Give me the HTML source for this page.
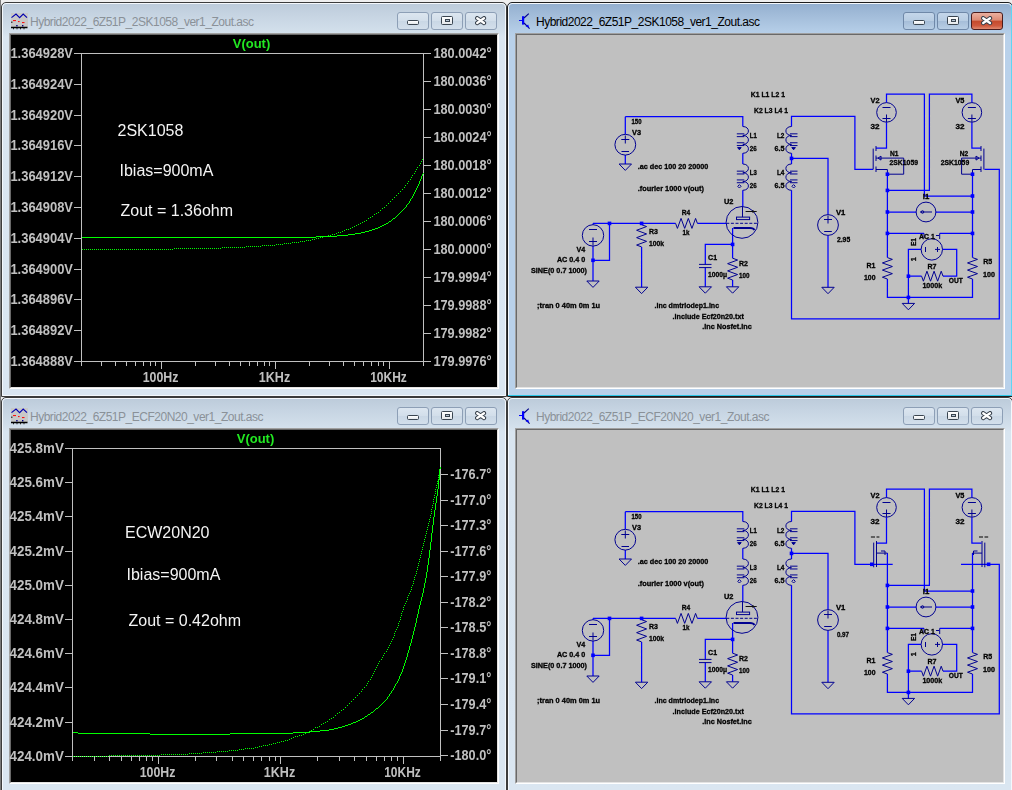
<!DOCTYPE html>
<html><head><meta charset="utf-8"><style>
*{margin:0;padding:0;box-sizing:border-box}
html,body{width:1012px;height:790px;overflow:hidden;background:#efefef;font-family:"Liberation Sans",sans-serif}
#edge{position:absolute;left:0;top:0;width:1px;height:790px;background:#7a7a7a}
.win{position:absolute;width:506px;height:395px;border:1px solid #3c3c3c;border-radius:5px 5px 0 0;background:#d9e4f0;overflow:hidden}
.win::before{content:"";position:absolute;left:0;top:0;right:0;bottom:0;border:1px solid #f4f8fc;border-radius:4px 4px 0 0;pointer-events:none}
.win .bar{position:absolute}
.win{background:linear-gradient(#bccbda 0px,#c6d4e2 12px,#d2dfeb 28px,#d9e5f0 34px,#dae6f1 100%)}
.win.act{border-color:#1e1e1e;background:linear-gradient(#93afcf 0px,#a2bcd9 12px,#b4cde7 28px,#b9d1ea 34px,#b9d1ea 100%)}
.win.act::after{content:"";position:absolute;right:0;bottom:0;left:0;top:0;border-right:1px solid #5ed6f4;border-bottom:1px solid #2cc8e8;pointer-events:none}
.ic{position:absolute;left:9px;top:10px;width:17px;height:17px}
.ic svg{display:block}
.tt{position:absolute;left:28px;top:12px;font-size:12px;letter-spacing:-0.49px;color:#8a9198;white-space:nowrap;line-height:15px}
.act .tt{color:#000}
.bt{position:absolute;top:9px;width:32px;height:18px;border:1px solid #8d9fb6;border-radius:3px;background:linear-gradient(#dce6f0,#d2deea 50%,#c9d7e5 51%,#d3dfeb)}
.act .bt{border-color:#6f88a8;background:linear-gradient(#c4d6ea,#b7cce2 50%,#a5bdd8 51%,#b8cee5)}
.b1{left:395px} .b2{left:429px} .b3{left:463px}
.act .b3{border-color:#4a1c1c;background:linear-gradient(#eab0a0,#dd8a74 45%,#c44a2c 50%,#cf5a3e 80%,#e08a70)}
.gmin{position:absolute;left:9px;top:7px;width:12px;height:5px;border:1px solid #3a4550;border-radius:1.5px;background:linear-gradient(#fff,#e4e8ec)}
.gres{position:absolute;left:9px;top:3px;width:12px;height:9px;border:1px solid #3a4550;border-radius:1.5px;background:linear-gradient(#fff,#e4e8ec)}
.gres b{position:absolute;left:2.5px;top:2px;width:5px;height:3px;border:1px solid #3a4550;background:#b8c6d4}
.b3 svg{position:absolute;left:8px;top:2.5px}
.cl{position:absolute;left:7px;top:30px;width:490px;height:356px;border-style:solid;border-width:1px;border-color:#a0a0a0 #ffffff #ffffff #a0a0a0}
.cl::before{content:"";position:absolute;left:0;top:0;right:0;bottom:0;border-style:solid;border-width:1px;border-color:#696969 #e3e3e3 #e3e3e3 #696969}
.cl.plt{background:#000}
.cl.sch{background:#c0c0c0}
#ov{position:absolute;left:0;top:0;will-change:transform}
#ov text{font-family:"Liberation Sans",sans-serif;font-size:14px;font-weight:bold;fill:#c0c0c0}
#ov .s text{font-size:7.2px;font-weight:bold;fill:#000;stroke:#000;stroke-width:0.3px}
</style></head><body>
<div id="edge"></div>
<div class="win" style="left:1px;top:2px">
<div class="ic"><svg class="plt" width="17" height="17" viewBox="0 0 17 17"><rect x="0" y="0" width="17" height="14" fill="#c8c8c8"/><path d="M0.5 4.6L5 1L8.6 4.6L12.2 1L16 4.6" fill="none" stroke="#0000b0" stroke-width="1.1"/><path d="M2 7.6h3M7 8.6h1.6M11 9.6h2.5" stroke="#ff0000" stroke-width="1"/><rect x="0.2" y="8.6" width="1.2" height="1.2" fill="#000"/><rect x="5.2" y="12" width="1.4" height="1.4" fill="#000080"/><rect x="11" y="12" width="1.4" height="1.4" fill="#000080"/><path d="M0 14.5H16.5" stroke="#000" stroke-width="1.6"/><path d="M2.5 15V16.3M6 15V16.3M9.5 15V16.3M13 15V16.3" stroke="#000" stroke-width="0.8"/></svg></div><div class="tt">Hybrid2022_6Z51P_2SK1058_ver1_Zout.asc</div>
<div class="bt b1"><i class="gmin"></i></div><div class="bt b2"><i class="gres"><b></b></i></div><div class="bt b3"><svg width="14" height="11" viewBox="0 0 14 11"><path d="M3.2 2.2L10 7M10 2.2L3.2 7" stroke="#363f4a" stroke-width="4.3" stroke-linecap="round"/><path d="M3.2 2.2L10 7M10 2.2L3.2 7" stroke="#fff" stroke-width="2.3" stroke-linecap="round"/></svg></div>
<div class="cl plt"></div>
</div>
<div class="win act" style="left:507px;top:2px">
<div class="ic"><svg class="sch" width="16" height="17" viewBox="0 0 16 17"><path d="M2 7.5H5.2" stroke="#0000ff" stroke-width="1"/><rect x="5" y="3.2" width="2.2" height="8.4" fill="#0000ff"/><path d="M7 5L11.8 0.6" stroke="#00008a" stroke-width="1.1"/><path d="M7 10L12.6 15.6" stroke="#00008a" stroke-width="1.1"/><path d="M8.6 13.2L11.2 11.4L12 14.6Z" fill="#0000ff"/></svg></div><div class="tt">Hybrid2022_6Z51P_2SK1058_ver1_Zout.asc</div>
<div class="bt b1"><i class="gmin"></i></div><div class="bt b2"><i class="gres"><b></b></i></div><div class="bt b3"><svg width="14" height="11" viewBox="0 0 14 11"><path d="M3.2 2.2L10 7M10 2.2L3.2 7" stroke="#363f4a" stroke-width="4.3" stroke-linecap="round"/><path d="M3.2 2.2L10 7M10 2.2L3.2 7" stroke="#fff" stroke-width="2.3" stroke-linecap="round"/></svg></div>
<div class="cl sch"></div>
</div>
<div class="win" style="left:1px;top:397px">
<div class="ic"><svg class="plt" width="17" height="17" viewBox="0 0 17 17"><rect x="0" y="0" width="17" height="14" fill="#c8c8c8"/><path d="M0.5 4.6L5 1L8.6 4.6L12.2 1L16 4.6" fill="none" stroke="#0000b0" stroke-width="1.1"/><path d="M2 7.6h3M7 8.6h1.6M11 9.6h2.5" stroke="#ff0000" stroke-width="1"/><rect x="0.2" y="8.6" width="1.2" height="1.2" fill="#000"/><rect x="5.2" y="12" width="1.4" height="1.4" fill="#000080"/><rect x="11" y="12" width="1.4" height="1.4" fill="#000080"/><path d="M0 14.5H16.5" stroke="#000" stroke-width="1.6"/><path d="M2.5 15V16.3M6 15V16.3M9.5 15V16.3M13 15V16.3" stroke="#000" stroke-width="0.8"/></svg></div><div class="tt">Hybrid2022_6Z51P_ECF20N20_ver1_Zout.asc</div>
<div class="bt b1"><i class="gmin"></i></div><div class="bt b2"><i class="gres"><b></b></i></div><div class="bt b3"><svg width="14" height="11" viewBox="0 0 14 11"><path d="M3.2 2.2L10 7M10 2.2L3.2 7" stroke="#363f4a" stroke-width="4.3" stroke-linecap="round"/><path d="M3.2 2.2L10 7M10 2.2L3.2 7" stroke="#fff" stroke-width="2.3" stroke-linecap="round"/></svg></div>
<div class="cl plt"></div>
</div>
<div class="win" style="left:507px;top:397px">
<div class="ic"><svg class="sch" width="16" height="17" viewBox="0 0 16 17"><path d="M2 7.5H5.2" stroke="#0000ff" stroke-width="1"/><rect x="5" y="3.2" width="2.2" height="8.4" fill="#0000ff"/><path d="M7 5L11.8 0.6" stroke="#00008a" stroke-width="1.1"/><path d="M7 10L12.6 15.6" stroke="#00008a" stroke-width="1.1"/><path d="M8.6 13.2L11.2 11.4L12 14.6Z" fill="#0000ff"/></svg></div><div class="tt">Hybrid2022_6Z51P_ECF20N20_ver1_Zout.asc</div>
<div class="bt b1"><i class="gmin"></i></div><div class="bt b2"><i class="gres"><b></b></i></div><div class="bt b3"><svg width="14" height="11" viewBox="0 0 14 11"><path d="M3.2 2.2L10 7M10 2.2L3.2 7" stroke="#363f4a" stroke-width="4.3" stroke-linecap="round"/><path d="M3.2 2.2L10 7M10 2.2L3.2 7" stroke="#fff" stroke-width="2.3" stroke-linecap="round"/></svg></div>
<div class="cl sch"></div>
</div>
<svg id="ov" width="1012" height="790" viewBox="0 0 1012 790">
<path d="M81.5 53.5H423.5V361.5H81.5Z" fill="none" stroke="#c0c0c0" stroke-width="1" shape-rendering="crispEdges"/>
<text x="73" y="58" text-anchor="end" textLength="62.6" lengthAdjust="spacingAndGlyphs">1.364928V</text>
<text x="73" y="89" text-anchor="end" textLength="62.6" lengthAdjust="spacingAndGlyphs">1.364924V</text>
<text x="73" y="120" text-anchor="end" textLength="62.6" lengthAdjust="spacingAndGlyphs">1.364920V</text>
<text x="73" y="150" text-anchor="end" textLength="62.6" lengthAdjust="spacingAndGlyphs">1.364916V</text>
<text x="73" y="181" text-anchor="end" textLength="62.6" lengthAdjust="spacingAndGlyphs">1.364912V</text>
<text x="73" y="212" text-anchor="end" textLength="62.6" lengthAdjust="spacingAndGlyphs">1.364908V</text>
<text x="73" y="243" text-anchor="end" textLength="62.6" lengthAdjust="spacingAndGlyphs">1.364904V</text>
<text x="73" y="274" text-anchor="end" textLength="62.6" lengthAdjust="spacingAndGlyphs">1.364900V</text>
<text x="73" y="304" text-anchor="end" textLength="62.6" lengthAdjust="spacingAndGlyphs">1.364896V</text>
<text x="73" y="335" text-anchor="end" textLength="62.6" lengthAdjust="spacingAndGlyphs">1.364892V</text>
<text x="73" y="366" text-anchor="end" textLength="62.6" lengthAdjust="spacingAndGlyphs">1.364888V</text>
<text x="433.4" y="58" textLength="58.2" lengthAdjust="spacingAndGlyphs">180.0042°</text>
<text x="433.4" y="86" textLength="58.2" lengthAdjust="spacingAndGlyphs">180.0036°</text>
<text x="433.4" y="114" textLength="58.2" lengthAdjust="spacingAndGlyphs">180.0030°</text>
<text x="433.4" y="142" textLength="58.2" lengthAdjust="spacingAndGlyphs">180.0024°</text>
<text x="433.4" y="170" textLength="58.2" lengthAdjust="spacingAndGlyphs">180.0018°</text>
<text x="433.4" y="198" textLength="58.2" lengthAdjust="spacingAndGlyphs">180.0012°</text>
<text x="433.4" y="226" textLength="58.2" lengthAdjust="spacingAndGlyphs">180.0006°</text>
<text x="433.4" y="254" textLength="58.2" lengthAdjust="spacingAndGlyphs">180.0000°</text>
<text x="433.4" y="282" textLength="58.2" lengthAdjust="spacingAndGlyphs">179.9994°</text>
<text x="433.4" y="310" textLength="58.2" lengthAdjust="spacingAndGlyphs">179.9988°</text>
<text x="433.4" y="338" textLength="58.2" lengthAdjust="spacingAndGlyphs">179.9982°</text>
<text x="433.4" y="366" textLength="58.2" lengthAdjust="spacingAndGlyphs">179.9976°</text>
<path d="M74 53.5H81 M74 84.5H81 M74 115.5H81 M74 145.5H81 M74 176.5H81 M74 207.5H81 M74 238.5H81 M74 269.5H81 M74 299.5H81 M74 330.5H81 M74 361.5H81 M424 53.5H431 M424 81.5H431 M424 109.5H431 M424 137.5H431 M424 165.5H431 M424 193.5H431 M424 221.5H431 M424 249.5H431 M424 277.5H431 M424 305.5H431 M424 333.5H431 M424 361.5H431 M81.5 362V366 M101.5 362V366 M115.5 362V366 M126.5 362V366 M135.5 362V366 M143.5 362V366 M150.5 362V366 M155.5 362V366 M161.5 362V369 M195.5 362V366 M215.5 362V366 M229.5 362V366 M240.5 362V366 M249.5 362V366 M257.5 362V366 M264.5 362V366 M269.5 362V366 M275.5 362V369 M309.5 362V366 M329.5 362V366 M343.5 362V366 M354.5 362V366 M363.5 362V366 M371.5 362V366 M378.5 362V366 M383.5 362V366 M389.5 362V369 M423.5 362V366" stroke="#c0c0c0" stroke-width="1" shape-rendering="crispEdges"/>
<text x="142.65" y="382" textLength="35.7" lengthAdjust="spacingAndGlyphs">100Hz</text>
<text x="258.8" y="382" textLength="31.4" lengthAdjust="spacingAndGlyphs">1KHz</text>
<text x="370.2" y="382" textLength="36.6" lengthAdjust="spacingAndGlyphs">10KHz</text>
<text x="251.5" y="47.5" text-anchor="middle" style="font-size:13px;fill:#22e822">V(out)</text>
<path d="M82 237h234v1h-234zM316 236h21v1h-21zM337 235h11v1h-11zM348 234h7v1h-7zM355 233h6v1h-6zM361 232h4v1h-4zM365 231h4v1h-4zM369 230h3v1h-3zM372 229h3v1h-3zM375 228h3v1h-3zM378 227h2v1h-2zM380 226h2v1h-2zM382 225h2v1h-2zM384 224h2v1h-2zM386 223h2v1h-2zM388 222h1v1h-1zM389 221h2v1h-2zM391 220h1v1h-1zM392 219h1v1h-1zM393 218h2v1h-2zM395 217h1v1h-1zM396 216h1v1h-1zM397 215h1v1h-1zM398 214h1v1h-1zM399 213h1v1h-1zM400 212h1v1h-1zM401 211h1v1h-1zM402 210h1v1h-1zM403 209h1v1h-1zM404 208h1v1h-1zM405 207h1v1h-1zM406 206h1v1h-1zM406 205h1v1h-1zM407 204h1v1h-1zM408 203h1v1h-1zM409 202h1v1h-1zM409 201h1v1h-1zM410 200h1v1h-1zM410 199h1v1h-1zM411 198h1v1h-1zM412 197h1v1h-1zM412 196h1v1h-1zM413 195h1v1h-1zM413 194h1v1h-1zM414 193h1v1h-1zM414 192h1v1h-1zM415 191h1v1h-1zM415 190h1v1h-1zM416 189h1v1h-1zM416 188h1v1h-1zM417 187h1v1h-1zM417 186h1v1h-1zM418 185h1v1h-1zM418 184h1v1h-1zM419 183h1v1h-1zM419 182h1v1h-1zM419 181h1v1h-1zM420 180h1v1h-1zM420 179h1v1h-1zM421 178h1v1h-1zM421 177h1v1h-1zM421 176h1v1h-1zM422 175h1v1h-1zM422 174h1v1h-1zM423 173h1v1h-1z" fill="#00ff00" shape-rendering="crispEdges"/>
<path d="M82 249h1v1h-1zM84 249h1v1h-1zM86 249h1v1h-1zM88 249h1v1h-1zM90 249h1v1h-1zM92 249h1v1h-1zM94 249h1v1h-1zM96 249h1v1h-1zM98 249h1v1h-1zM100 249h1v1h-1zM102 249h1v1h-1zM104 249h1v1h-1zM106 249h1v1h-1zM108 249h1v1h-1zM110 249h1v1h-1zM112 249h1v1h-1zM114 249h1v1h-1zM116 249h1v1h-1zM118 249h1v1h-1zM120 249h1v1h-1zM122 249h1v1h-1zM124 249h1v1h-1zM126 249h1v1h-1zM128 249h1v1h-1zM130 249h1v1h-1zM132 249h1v1h-1zM134 249h1v1h-1zM136 249h1v1h-1zM138 249h1v1h-1zM140 249h1v1h-1zM142 249h1v1h-1zM144 249h1v1h-1zM146 249h1v1h-1zM148 249h1v1h-1zM150 249h1v1h-1zM152 249h1v1h-1zM154 249h1v1h-1zM156 249h1v1h-1zM158 249h1v1h-1zM160 249h1v1h-1zM162 249h1v1h-1zM164 249h1v1h-1zM166 249h1v1h-1zM168 249h1v1h-1zM170 249h1v1h-1zM172 249h1v1h-1zM174 248h1v1h-1zM176 248h1v1h-1zM178 248h1v1h-1zM180 248h1v1h-1zM182 248h1v1h-1zM184 248h1v1h-1zM186 248h1v1h-1zM188 248h1v1h-1zM190 248h1v1h-1zM192 248h1v1h-1zM194 248h1v1h-1zM196 248h1v1h-1zM198 248h1v1h-1zM200 248h1v1h-1zM202 248h1v1h-1zM204 248h1v1h-1zM206 248h1v1h-1zM208 248h1v1h-1zM210 248h1v1h-1zM212 248h1v1h-1zM214 248h1v1h-1zM216 248h1v1h-1zM218 248h1v1h-1zM220 248h1v1h-1zM222 247h1v1h-1zM224 247h1v1h-1zM226 247h1v1h-1zM228 247h1v1h-1zM230 247h1v1h-1zM232 247h1v1h-1zM234 247h1v1h-1zM236 247h1v1h-1zM238 247h1v1h-1zM240 247h1v1h-1zM242 247h1v1h-1zM244 247h1v1h-1zM246 246h1v1h-1zM248 246h1v1h-1zM250 246h1v1h-1zM252 246h1v1h-1zM254 246h1v1h-1zM256 246h1v1h-1zM258 246h1v1h-1zM260 246h1v1h-1zM262 245h1v1h-1zM264 245h1v1h-1zM266 245h1v1h-1zM268 245h1v1h-1zM270 245h1v1h-1zM272 245h1v1h-1zM274 245h1v1h-1zM276 244h1v1h-1zM278 244h1v1h-1zM280 244h1v1h-1zM282 244h1v1h-1zM284 243h1v1h-1zM286 243h1v1h-1zM288 243h1v1h-1zM290 243h1v1h-1zM292 242h1v1h-1zM294 242h1v1h-1zM296 242h1v1h-1zM298 242h1v1h-1zM300 241h1v1h-1zM302 241h1v1h-1zM304 241h1v1h-1zM306 240h1v1h-1zM308 240h1v1h-1zM310 240h1v1h-1zM312 239h1v1h-1zM314 239h1v1h-1zM316 238h1v1h-1zM318 238h1v1h-1zM320 237h1v1h-1zM322 237h1v1h-1zM324 236h1v1h-1zM326 236h1v1h-1zM328 235h1v1h-1zM330 235h1v1h-1zM332 234h1v1h-1zM334 234h1v1h-1zM336 233h1v1h-1zM338 232h1v1h-1zM340 232h1v1h-1zM342 231h1v1h-1zM344 230h1v1h-1zM346 229h1v1h-1zM348 229h1v1h-1zM350 228h1v1h-1zM352 227h1v1h-1zM354 226h1v1h-1zM356 225h1v1h-1zM358 224h1v1h-1zM360 223h1v1h-1zM362 222h1v1h-1zM364 221h1v1h-1zM366 220h1v1h-1zM368 218h1v1h-1zM370 217h1v1h-1zM372 216h1v1h-1zM374 214h1v1h-1zM376 213h1v1h-1zM378 212h1v1h-1zM380 210h1v1h-1zM382 208h1v1h-1zM384 207h1v1h-1zM386 205h1v1h-1zM388 203h1v1h-1zM390 201h1v1h-1zM392 199h1v1h-1zM394 197h1v1h-1zM396 195h1v1h-1zM398 193h1v1h-1zM400 191h1v1h-1zM402 189h1v1h-1zM404 187h1v1h-1zM405 185h1v1h-1zM407 183h1v1h-1zM408 181h1v1h-1zM410 179h1v1h-1zM411 177h1v1h-1zM412 175h1v1h-1zM414 173h1v1h-1zM415 171h1v1h-1zM416 169h1v1h-1zM417 167h1v1h-1zM419 165h1v1h-1zM420 163h1v1h-1zM421 161h1v1h-1zM422 159h1v1h-1z" fill="#00ff00" shape-rendering="crispEdges"/>
<text x="117.5" y="135.5" style="font-size:16px;font-weight:normal;fill:#f4f4f4">2SK1058</text>
<text x="119.5" y="175.5" style="font-size:16px;font-weight:normal;fill:#f4f4f4">Ibias=900mA</text>
<text x="120.5" y="215.5" style="font-size:16px;font-weight:normal;fill:#f4f4f4">Zout = 1.36ohm</text>
<path d="M72.5 448.5H440.5V756.5H72.5Z" fill="none" stroke="#c0c0c0" stroke-width="1" shape-rendering="crispEdges"/>
<text x="63.8" y="453" text-anchor="end" textLength="54.2" lengthAdjust="spacingAndGlyphs">425.8mV</text>
<text x="63.8" y="487" text-anchor="end" textLength="54.2" lengthAdjust="spacingAndGlyphs">425.6mV</text>
<text x="63.8" y="521" text-anchor="end" textLength="54.2" lengthAdjust="spacingAndGlyphs">425.4mV</text>
<text x="63.8" y="556" text-anchor="end" textLength="54.2" lengthAdjust="spacingAndGlyphs">425.2mV</text>
<text x="63.8" y="590" text-anchor="end" textLength="54.2" lengthAdjust="spacingAndGlyphs">425.0mV</text>
<text x="63.8" y="624" text-anchor="end" textLength="54.2" lengthAdjust="spacingAndGlyphs">424.8mV</text>
<text x="63.8" y="658" text-anchor="end" textLength="54.2" lengthAdjust="spacingAndGlyphs">424.6mV</text>
<text x="63.8" y="692" text-anchor="end" textLength="54.2" lengthAdjust="spacingAndGlyphs">424.4mV</text>
<text x="63.8" y="727" text-anchor="end" textLength="54.2" lengthAdjust="spacingAndGlyphs">424.2mV</text>
<text x="63.8" y="761" text-anchor="end" textLength="54.2" lengthAdjust="spacingAndGlyphs">424.0mV</text>
<text x="450.3" y="479" textLength="41" lengthAdjust="spacingAndGlyphs">-176.7°</text>
<text x="450.3" y="505" textLength="41" lengthAdjust="spacingAndGlyphs">-177.0°</text>
<text x="450.3" y="530" textLength="41" lengthAdjust="spacingAndGlyphs">-177.3°</text>
<text x="450.3" y="556" textLength="41" lengthAdjust="spacingAndGlyphs">-177.6°</text>
<text x="450.3" y="581" textLength="41" lengthAdjust="spacingAndGlyphs">-177.9°</text>
<text x="450.3" y="607" textLength="41" lengthAdjust="spacingAndGlyphs">-178.2°</text>
<text x="450.3" y="632" textLength="41" lengthAdjust="spacingAndGlyphs">-178.5°</text>
<text x="450.3" y="658" textLength="41" lengthAdjust="spacingAndGlyphs">-178.8°</text>
<text x="450.3" y="683" textLength="41" lengthAdjust="spacingAndGlyphs">-179.1°</text>
<text x="450.3" y="709" textLength="41" lengthAdjust="spacingAndGlyphs">-179.4°</text>
<text x="450.3" y="735" textLength="41" lengthAdjust="spacingAndGlyphs">-179.7°</text>
<text x="450.3" y="760" textLength="41" lengthAdjust="spacingAndGlyphs">-180.0°</text>
<path d="M65 448.5H72 M65 482.5H72 M65 516.5H72 M65 551.5H72 M65 585.5H72 M65 619.5H72 M65 653.5H72 M65 687.5H72 M65 722.5H72 M65 756.5H72 M441 474.5H448 M441 500.5H448 M441 525.5H448 M441 551.5H448 M441 576.5H448 M441 602.5H448 M441 627.5H448 M441 653.5H448 M441 678.5H448 M441 704.5H448 M441 730.5H448 M441 755.5H448 M72.5 757V761 M94.5 757V761 M109.5 757V761 M121.5 757V761 M131.5 757V761 M139.5 757V761 M146.5 757V761 M152.5 757V761 M158.5 757V764 M195.5 757V761 M216.5 757V761 M232.5 757V761 M243.5 757V761 M253.5 757V761 M261.5 757V761 M269.5 757V761 M275.5 757V761 M280.5 757V764 M317.5 757V761 M339.5 757V761 M354.5 757V761 M366.5 757V761 M376.5 757V761 M384.5 757V761 M391.5 757V761 M397.5 757V761 M403.5 757V764 M440.5 757V761" stroke="#c0c0c0" stroke-width="1" shape-rendering="crispEdges"/>
<text x="139.65" y="777" textLength="35.7" lengthAdjust="spacingAndGlyphs">100Hz</text>
<text x="263.8" y="777" textLength="31.4" lengthAdjust="spacingAndGlyphs">1KHz</text>
<text x="384.2" y="777" textLength="36.6" lengthAdjust="spacingAndGlyphs">10KHz</text>
<text x="255.5" y="442.5" text-anchor="middle" style="font-size:13px;fill:#22e822">V(out)</text>
<path d="M73 732h5v1h-5zM78 733h72v1h-72zM150 734h80v1h-80zM230 733h63v1h-63zM293 732h17v1h-17zM310 731h10v1h-10zM320 730h9v1h-9zM329 729h5v1h-5zM334 728h4v1h-4zM338 727h4v1h-4zM342 726h3v1h-3zM345 725h3v1h-3zM348 724h3v1h-3zM351 723h2v1h-2zM353 722h3v1h-3zM356 721h2v1h-2zM358 720h2v1h-2zM360 719h2v1h-2zM362 718h2v1h-2zM364 717h1v1h-1zM365 716h2v1h-2zM367 715h1v1h-1zM368 714h2v1h-2zM370 713h1v1h-1zM371 712h2v1h-2zM373 711h1v1h-1zM374 710h1v1h-1zM375 709h1v1h-1zM376 708h2v1h-2zM378 707h1v1h-1zM379 706h1v1h-1zM380 705h1v1h-1zM381 704h1v1h-1zM382 703h1v1h-1zM383 702h1v1h-1zM384 701h1v1h-1zM385 700h1v1h-1zM386 699h1v1h-1zM387 698h1v1h-1zM387 697h1v1h-1zM388 696h1v1h-1zM389 695h1v1h-1zM389 694h1v1h-1zM390 693h1v1h-1zM391 692h1v1h-1zM391 691h1v1h-1zM392 690h1v1h-1zM393 689h1v1h-1zM393 688h1v1h-1zM394 687h1v1h-1zM394 686h1v1h-1zM395 685h1v1h-1zM395 684h1v1h-1zM396 683h1v1h-1zM397 682h1v1h-1zM397 681h1v1h-1zM398 680h1v1h-1zM398 679h1v1h-1zM399 678h1v1h-1zM399 677h1v1h-1zM399 676h1v1h-1zM400 675h1v1h-1zM400 674h1v1h-1zM401 673h1v1h-1zM401 672h1v1h-1zM402 671h1v1h-1zM402 670h1v1h-1zM402 669h1v1h-1zM403 668h1v1h-1zM403 667h1v1h-1zM403 666h1v1h-1zM404 665h1v1h-1zM404 664h1v1h-1zM404 663h1v1h-1zM405 662h1v1h-1zM405 661h1v1h-1zM405 660h1v1h-1zM406 659h1v1h-1zM406 658h1v1h-1zM406 657h1v1h-1zM407 656h1v1h-1zM407 655h1v1h-1zM407 654h1v1h-1zM407 653h1v1h-1zM408 652h1v1h-1zM408 651h1v1h-1zM408 650h1v1h-1zM409 649h1v1h-1zM409 648h1v1h-1zM409 647h1v1h-1zM409 646h1v1h-1zM410 645h1v1h-1zM410 644h1v1h-1zM410 643h1v1h-1zM411 642h1v1h-1zM411 641h1v1h-1zM411 640h1v1h-1zM411 639h1v1h-1zM412 638h1v1h-1zM412 637h1v1h-1zM412 636h1v1h-1zM412 635h1v1h-1zM413 634h1v1h-1zM413 633h1v1h-1zM413 632h1v1h-1zM413 631h1v1h-1zM414 630h1v1h-1zM414 629h1v1h-1zM414 628h1v1h-1zM414 627h1v1h-1zM415 626h1v1h-1zM415 625h1v1h-1zM415 624h1v1h-1zM415 623h1v1h-1zM416 622h1v1h-1zM416 621h1v1h-1zM416 620h1v1h-1zM416 619h1v1h-1zM416 618h1v1h-1zM417 617h1v1h-1zM417 616h1v1h-1zM417 615h1v1h-1zM417 614h1v1h-1zM418 613h1v1h-1zM418 612h1v1h-1zM418 611h1v1h-1zM418 610h1v1h-1zM418 609h1v1h-1zM419 608h1v1h-1zM419 607h1v1h-1zM419 606h1v1h-1zM419 605h1v1h-1zM420 604h1v1h-1zM420 603h1v1h-1zM420 602h1v1h-1zM420 601h1v1h-1zM421 600h1v1h-1zM421 599h1v1h-1zM421 598h1v1h-1zM421 597h1v1h-1zM422 596h1v1h-1zM422 595h1v1h-1zM422 594h1v1h-1zM422 593h1v1h-1zM423 592h1v1h-1zM423 591h1v1h-1zM423 590h1v1h-1zM423 589h1v1h-1zM423 588h1v1h-1zM424 587h1v1h-1zM424 586h1v1h-1zM424 585h1v1h-1zM424 584h1v1h-1zM424 583h1v1h-1zM425 582h1v1h-1zM425 581h1v1h-1zM425 580h1v1h-1zM425 579h1v1h-1zM425 578h1v1h-1zM426 577h1v1h-1zM426 576h1v1h-1zM426 575h1v1h-1zM426 574h1v1h-1zM426 573h1v1h-1zM426 572h1v1h-1zM427 571h1v1h-1zM427 570h1v1h-1zM427 569h1v1h-1zM427 568h1v1h-1zM427 567h1v1h-1zM427 566h1v1h-1zM427 565h1v1h-1zM428 564h1v1h-1zM428 563h1v1h-1zM428 562h1v1h-1zM428 561h1v1h-1zM428 560h1v1h-1zM428 559h1v1h-1zM428 558h1v1h-1zM429 557h1v1h-1zM429 556h1v1h-1zM429 555h1v1h-1zM429 554h1v1h-1zM429 553h1v1h-1zM429 552h1v1h-1zM429 551h1v1h-1zM429 550h1v1h-1zM430 549h1v1h-1zM430 548h1v1h-1zM430 547h1v1h-1zM430 546h1v1h-1zM430 545h1v1h-1zM430 544h1v1h-1zM430 543h1v1h-1zM430 542h1v1h-1zM431 541h1v1h-1zM431 540h1v1h-1zM431 539h1v1h-1zM431 538h1v1h-1zM431 537h1v1h-1zM431 536h1v1h-1zM431 535h1v1h-1zM431 534h1v1h-1zM431 533h1v1h-1zM432 532h1v1h-1zM432 531h1v1h-1zM432 530h1v1h-1zM432 529h1v1h-1zM432 528h1v1h-1zM432 527h1v1h-1zM432 526h1v1h-1zM432 525h1v1h-1zM433 524h1v1h-1zM433 523h1v1h-1zM433 522h1v1h-1zM433 521h1v1h-1zM433 520h1v1h-1zM433 519h1v1h-1zM433 518h1v1h-1zM433 517h1v1h-1zM434 516h1v1h-1zM434 515h1v1h-1zM434 514h1v1h-1zM434 513h1v1h-1zM434 512h1v1h-1zM434 511h1v1h-1zM434 510h1v1h-1zM435 509h1v1h-1zM435 508h1v1h-1zM435 507h1v1h-1zM435 506h1v1h-1zM435 505h1v1h-1zM435 504h1v1h-1zM435 503h1v1h-1zM436 502h1v1h-1zM436 501h1v1h-1zM436 500h1v1h-1zM436 499h1v1h-1zM436 498h1v1h-1zM436 497h1v1h-1zM436 496h1v1h-1zM437 495h1v1h-1zM437 494h1v1h-1zM437 493h1v1h-1zM437 492h1v1h-1zM437 491h1v1h-1zM437 490h1v1h-1zM437 489h1v1h-1zM438 488h1v1h-1zM438 487h1v1h-1zM438 486h1v1h-1zM438 485h1v1h-1zM438 484h1v1h-1zM438 483h1v1h-1zM438 482h1v1h-1zM438 481h1v1h-1zM438 480h1v1h-1zM439 479h1v1h-1zM439 478h1v1h-1zM439 477h1v1h-1zM439 476h1v1h-1zM439 475h1v1h-1zM439 474h1v1h-1zM439 473h1v1h-1zM439 472h1v1h-1zM439 471h1v1h-1zM439 470h1v1h-1zM439 469h1v1h-1zM440 468h1v1h-1z" fill="#00ff00" shape-rendering="crispEdges"/>
<path d="M73 756h1v1h-1zM75 756h1v1h-1zM77 756h1v1h-1zM79 756h1v1h-1zM81 756h1v1h-1zM83 756h1v1h-1zM85 756h1v1h-1zM87 756h1v1h-1zM89 756h1v1h-1zM91 756h1v1h-1zM93 756h1v1h-1zM95 756h1v1h-1zM97 756h1v1h-1zM99 756h1v1h-1zM101 756h1v1h-1zM103 756h1v1h-1zM105 756h1v1h-1zM107 756h1v1h-1zM109 755h1v1h-1zM111 755h1v1h-1zM113 755h1v1h-1zM115 755h1v1h-1zM117 755h1v1h-1zM119 755h1v1h-1zM121 755h1v1h-1zM123 755h1v1h-1zM125 755h1v1h-1zM127 755h1v1h-1zM129 755h1v1h-1zM131 755h1v1h-1zM133 755h1v1h-1zM135 755h1v1h-1zM137 755h1v1h-1zM139 755h1v1h-1zM141 755h1v1h-1zM143 755h1v1h-1zM145 755h1v1h-1zM147 755h1v1h-1zM149 755h1v1h-1zM151 755h1v1h-1zM153 755h1v1h-1zM155 755h1v1h-1zM157 755h1v1h-1zM159 755h1v1h-1zM161 754h1v1h-1zM163 754h1v1h-1zM165 754h1v1h-1zM167 754h1v1h-1zM169 754h1v1h-1zM171 754h1v1h-1zM173 754h1v1h-1zM175 754h1v1h-1zM177 754h1v1h-1zM179 754h1v1h-1zM181 754h1v1h-1zM183 754h1v1h-1zM185 754h1v1h-1zM187 754h1v1h-1zM189 753h1v1h-1zM191 753h1v1h-1zM193 753h1v1h-1zM195 753h1v1h-1zM197 753h1v1h-1zM199 753h1v1h-1zM201 753h1v1h-1zM203 752h1v1h-1zM205 752h1v1h-1zM207 752h1v1h-1zM209 752h1v1h-1zM211 752h1v1h-1zM213 752h1v1h-1zM215 752h1v1h-1zM217 751h1v1h-1zM219 751h1v1h-1zM221 751h1v1h-1zM223 751h1v1h-1zM225 751h1v1h-1zM227 751h1v1h-1zM229 750h1v1h-1zM231 750h1v1h-1zM233 750h1v1h-1zM235 750h1v1h-1zM237 750h1v1h-1zM239 749h1v1h-1zM241 749h1v1h-1zM243 749h1v1h-1zM245 748h1v1h-1zM247 748h1v1h-1zM249 748h1v1h-1zM251 748h1v1h-1zM253 748h1v1h-1zM255 747h1v1h-1zM257 747h1v1h-1zM259 746h1v1h-1zM261 746h1v1h-1zM263 745h1v1h-1zM265 745h1v1h-1zM267 745h1v1h-1zM269 744h1v1h-1zM271 744h1v1h-1zM273 743h1v1h-1zM275 743h1v1h-1zM277 742h1v1h-1zM279 742h1v1h-1zM281 741h1v1h-1zM283 741h1v1h-1zM285 740h1v1h-1zM287 740h1v1h-1zM289 739h1v1h-1zM291 738h1v1h-1zM293 737h1v1h-1zM295 736h1v1h-1zM297 736h1v1h-1zM299 735h1v1h-1zM301 735h1v1h-1zM303 734h1v1h-1zM305 733h1v1h-1zM307 732h1v1h-1zM309 731h1v1h-1zM311 730h1v1h-1zM313 729h1v1h-1zM315 727h1v1h-1zM317 727h1v1h-1zM319 726h1v1h-1zM321 724h1v1h-1zM323 723h1v1h-1zM325 722h1v1h-1zM327 721h1v1h-1zM329 719h1v1h-1zM331 718h1v1h-1zM333 717h1v1h-1zM335 715h1v1h-1zM337 713h1v1h-1zM339 712h1v1h-1zM341 710h1v1h-1zM343 709h1v1h-1zM345 707h1v1h-1zM347 705h1v1h-1zM349 703h1v1h-1zM351 701h1v1h-1zM353 699h1v1h-1zM355 697h1v1h-1zM357 695h1v1h-1zM359 693h1v1h-1zM361 691h1v1h-1zM362 689h1v1h-1zM364 687h1v1h-1zM366 685h1v1h-1zM367 683h1v1h-1zM368 681h1v1h-1zM370 679h1v1h-1zM371 677h1v1h-1zM372 675h1v1h-1zM373 673h1v1h-1zM374 671h1v1h-1zM375 669h1v1h-1zM376 667h1v1h-1zM377 665h1v1h-1zM378 663h1v1h-1zM379 661h1v1h-1zM381 659h1v1h-1zM382 657h1v1h-1zM383 655h1v1h-1zM384 653h1v1h-1zM386 651h1v1h-1zM387 649h1v1h-1zM388 647h1v1h-1zM389 645h1v1h-1zM390 643h1v1h-1zM391 641h1v1h-1zM392 639h1v1h-1zM393 637h1v1h-1zM394 635h1v1h-1zM394 633h1v1h-1zM395 631h1v1h-1zM396 629h1v1h-1zM397 627h1v1h-1zM398 625h1v1h-1zM398 623h1v1h-1zM399 621h1v1h-1zM400 619h1v1h-1zM400 617h1v1h-1zM401 615h1v1h-1zM401 613h1v1h-1zM402 611h1v1h-1zM403 609h1v1h-1zM403 607h1v1h-1zM404 605h1v1h-1zM405 603h1v1h-1zM406 601h1v1h-1zM407 599h1v1h-1zM407 597h1v1h-1zM408 595h1v1h-1zM409 593h1v1h-1zM410 591h1v1h-1zM411 589h1v1h-1zM411 587h1v1h-1zM412 585h1v1h-1zM413 583h1v1h-1zM413 581h1v1h-1zM414 579h1v1h-1zM414 577h1v1h-1zM415 575h1v1h-1zM416 573h1v1h-1zM416 571h1v1h-1zM417 569h1v1h-1zM417 567h1v1h-1zM418 565h1v1h-1zM418 563h1v1h-1zM419 561h1v1h-1zM419 559h1v1h-1zM420 557h1v1h-1zM420 555h1v1h-1zM421 553h1v1h-1zM421 551h1v1h-1zM422 549h1v1h-1zM422 547h1v1h-1zM423 545h1v1h-1zM423 543h1v1h-1zM424 541h1v1h-1zM424 539h1v1h-1zM425 537h1v1h-1zM425 535h1v1h-1zM426 533h1v1h-1zM426 531h1v1h-1zM427 529h1v1h-1zM427 527h1v1h-1zM428 525h1v1h-1zM428 523h1v1h-1zM429 521h1v1h-1zM429 519h1v1h-1zM430 517h1v1h-1zM430 515h1v1h-1zM431 513h1v1h-1zM431 511h1v1h-1zM431 509h1v1h-1zM432 507h1v1h-1zM432 505h1v1h-1zM433 503h1v1h-1zM433 501h1v1h-1zM433 499h1v1h-1zM434 497h1v1h-1zM434 495h1v1h-1zM435 493h1v1h-1zM435 491h1v1h-1zM435 489h1v1h-1zM436 487h1v1h-1zM436 485h1v1h-1zM437 483h1v1h-1zM437 481h1v1h-1zM438 479h1v1h-1zM438 477h1v1h-1zM438 475h1v1h-1zM439 473h1v1h-1zM439 471h1v1h-1zM439 469h1v1h-1zM440 467h1v1h-1z" fill="#00ff00" shape-rendering="crispEdges"/>
<text x="125" y="538" style="font-size:16px;font-weight:normal;fill:#f4f4f4">ECW20N20</text>
<text x="126.5" y="579.5" style="font-size:16px;font-weight:normal;fill:#f4f4f4">Ibias=900mA</text>
<text x="128.5" y="625.5" style="font-size:16px;font-weight:normal;fill:#f4f4f4">Zout = 0.42ohm</text>
<g class="s"><path d="M625.3 116.7 L742.8 116.7 L742.8 126.5 M625.3 116.7 L625.3 134.3 M625.3 155.1 L625.3 164 M625.3 164 L625.3 164 M742.8 153.3 L742.8 164 M742.8 190.3 L742.8 206.5 M791.5 126.5 L791.5 116.4 L854.9 116.4 L854.9 169.3 L873 169.3 M791.5 153.3 L791.5 164 M791.5 190.3 L791.5 318.9 L999.3 318.9 L999.3 169.3 L984.5 169.3 M791.5 158.4 L828 158.4 L828 214.6 M828 235.4 L828 287.3 M828 287.3 L828 287.3 M593 223.4 L675.6 223.4 M697.4 223.4 L726.3 223.4 M593 224.7 L593 223.4 M609.5 223.4 L609.5 260.3 L593 260.3 M593 246.1 L593 281 M593 281 L593 281 M641.6 246.9 L641.6 287.2 M641.6 287.2 L641.6 287.2 M732.6 228 L732.6 258.2 M732.6 244.4 L705.3 244.4 L705.3 264.4 M705.3 267.6 L705.3 286.8 M705.3 286.8 L705.3 286.8 M732.6 280 L732.6 286.8 M732.6 286.8 L732.6 286.8 M886.5 102.6 L886.5 94.1 L924.4 94.1 L924.4 196 L972.5 196 M971.9 102.6 L971.9 94.1 L929.4 94.1 L929.4 190.4 L887.4 190.4 M886.5 122.2 L886.5 148.2 L876 148.2 M971.9 122.2 L971.9 148.2 L981 148.2 M887.4 174.2 L887.4 257.6 M972.5 174.2 L972.5 257.6 M887.4 212 L916.1 212 M935.9 212 L972.5 212 M887.4 233.4 L924 233.4 M939.7 233.4 L972.5 233.4 M921.1 249.4 L908.4 249.4 L908.4 303.4 M942.5 249.4 L956.7 249.4 L956.7 276.2 L943 276.2 M908.4 276.2 L921.6 276.2 M887.4 279 L887.4 297.4 L972.5 297.4 L972.5 279 M908.4 303.4 L908.4 303.4" fill="none" stroke="#0000ff" stroke-width="1.25"/>
<g fill="none" stroke="#000090" stroke-width="1"><circle cx="625.3" cy="144.7" r="10.4"/><path d="M621.3 139.5H629.3M625.3 135.5V143.5M621.5 151.5H629"/><path d="M619.1 164H631.5L625.3 170.4Z"/><path d="M742.8 126.5 C750.3 126.5 750.3 135.43 742.8 135.43 C750.3 135.43 750.3 144.37 742.8 144.37 C750.3 144.37 750.3 153.3 742.8 153.3"/><path d="M736.8 133.83H744.3 M736.8 136.63H744.3"/><path d="M736.8 142.77H744.3 M736.8 145.57H744.3"/><path d="M742.8 164 C750.3 164 750.3 172.77 742.8 172.77 C750.3 172.77 750.3 181.53 742.8 181.53 C750.3 181.53 750.3 190.3 742.8 190.3"/><path d="M736.8 171.17H744.3 M736.8 173.97H744.3"/><path d="M736.8 179.93H744.3 M736.8 182.73H744.3"/><path d="M737.6 147.6H741.2L739.4 149.8Z" fill="#000090"/><path d="M791.8 147.6H795.4L793.6 149.8Z" fill="#000090"/><path d="M739.4 184.6L741.1 186.3L739.4 188L737.7 186.3Z"/><path d="M793.6 184.6L795.3 186.3L793.6 188L791.9 186.3Z"/><path d="M791.5 126.5 C784 126.5 784 135.43 791.5 135.43 C784 135.43 784 144.37 791.5 144.37 C784 144.37 784 153.3 791.5 153.3"/><path d="M797.5 133.83H790 M797.5 136.63H790"/><path d="M797.5 142.77H790 M797.5 145.57H790"/><path d="M791.5 164 C784 164 784 172.77 791.5 172.77 C784 172.77 784 181.53 791.5 181.53 C784 181.53 784 190.3 791.5 190.3"/><path d="M797.5 171.17H790 M797.5 173.97H790"/><path d="M797.5 179.93H790 M797.5 182.73H790"/><circle cx="828" cy="225" r="10.4"/><path d="M824 219.5H832M828 215.5V223.5M824.2 231.5H831.8"/><path d="M821.8 287.3H834.2L828 293.7Z"/><path d="M675.6 223.4 L677.42 228.4 L681.05 218.4 L684.68 228.4 L688.32 218.4 L691.95 228.4 L695.58 218.4 L697.4 223.4"/><circle cx="593" cy="235.4" r="10.7"/><path d="M589 229.5H597M589 241.5H597M593 237.5V245.5"/><path d="M586.8 281H599.2L593 287.4Z"/><path d="M641.6 224.7 L646.6 226.55 L636.6 230.25 L646.6 233.95 L636.6 237.65 L646.6 241.35 L636.6 245.05 L641.6 246.9"/><path d="M635.4 287.2H647.8L641.6 293.6Z"/><circle cx="742" cy="222.4" r="15.9"/><path d="M742.5 206.5V217.1"/><rect x="736.5" y="217.1" width="13.1" height="2.5"/><path d="M726.3 223.3H758" stroke-dasharray="3 1.6"/><path d="M733.5 228H750 Q753.5 228 754.5 230" stroke-width="2"/><path d="M699 264.4H711.5M699 267.6H711.5"/><path d="M699.1 286.8H711.5L705.3 293.2Z"/><path d="M732.6 258.2 L737.6 260.02 L727.6 263.65 L737.6 267.28 L727.6 270.92 L737.6 274.55 L727.6 278.18 L732.6 280"/><path d="M726.4 286.8H738.8L732.6 293.2Z"/><circle cx="886.5" cy="112.4" r="9.8"/><path d="M882.5 107.5H890.5M882.5 118.5H890.5M886.5 114.5V122"/><circle cx="971.9" cy="112.4" r="9.8"/><path d="M967.9 107.5H975.9M967.9 118.5H975.9M971.9 114.5V122"/><path d="M873.2 148.6V169.5M876 146V151M876 155.5V161M876 166.5V172"/><path d="M876 158.1H903.7V174.2H887.4M876 169.5H887.4V174.2M878 158.1l3 -2v4z"/><path d="M983.9 148.6V169.5M981 146V151M981 155.5V161M981 166.5V172"/><path d="M981 158.1H961.6V174.2H972.5M981 169.5H972.5V174.2M979 158.1l-3 -2v4z"/><circle cx="926" cy="212" r="9.9"/><path d="M920 212H932"/><circle cx="922.5" cy="212" r="1.3"/><path d="M939.7 233.4V239M936 235.5H939M924 233.4V238"/><circle cx="931.8" cy="249.4" r="10.7"/><path d="M925.5 247V252M935 249.4H940M937.5 247V252"/><path d="M921.6 276.2 L923.38 281.2 L926.95 271.2 L930.52 281.2 L934.08 271.2 L937.65 281.2 L941.22 271.2 L943 276.2"/><path d="M887.4 257.6 L892.4 259.38 L882.4 262.95 L892.4 266.52 L882.4 270.08 L892.4 273.65 L882.4 277.22 L887.4 279"/><path d="M972.5 257.6 L977.5 259.38 L967.5 262.95 L977.5 266.52 L967.5 270.08 L977.5 273.65 L967.5 277.22 L972.5 279"/><path d="M902.2 303.4H914.6L908.4 309.8Z"/></g>
<g fill="#0000ff"><rect x="789.7" y="156.6" width="3.6" height="3.6"/><rect x="607.7" y="221.6" width="3.6" height="3.6"/><rect x="591.2" y="258.5" width="3.6" height="3.6"/><rect x="639.8" y="221.6" width="3.6" height="3.6"/><rect x="730.8" y="242.6" width="3.6" height="3.6"/><rect x="970.7" y="194.2" width="3.6" height="3.6"/><rect x="885.6" y="188.6" width="3.6" height="3.6"/><rect x="885.6" y="172.4" width="3.6" height="3.6"/><rect x="970.7" y="172.4" width="3.6" height="3.6"/><rect x="885.6" y="210.2" width="3.6" height="3.6"/><rect x="970.7" y="210.2" width="3.6" height="3.6"/><rect x="885.6" y="231.6" width="3.6" height="3.6"/><rect x="970.7" y="231.6" width="3.6" height="3.6"/><rect x="906.6" y="274.4" width="3.6" height="3.6"/><rect x="906.6" y="295.6" width="3.6" height="3.6"/></g>
<text x="631.5" y="124.1" textLength="10" lengthAdjust="spacingAndGlyphs">150</text><text x="632" y="134.9" textLength="9" lengthAdjust="spacingAndGlyphs">V3</text><text x="637.7" y="168.6" textLength="70.6" lengthAdjust="spacingAndGlyphs">.ac dec 100 20 20000</text><text x="637.7" y="190.9" textLength="66.3" lengthAdjust="spacingAndGlyphs">.fourier 1000 v(out)</text><text x="750.8" y="97.1" textLength="34.2" lengthAdjust="spacingAndGlyphs">K1 L1 L2 1</text><text x="754" y="113.1" textLength="34" lengthAdjust="spacingAndGlyphs">K2 L3 L4 1</text><text x="749.8" y="137.6" textLength="7" lengthAdjust="spacingAndGlyphs">L1</text><text x="749.8" y="151.1" textLength="7" lengthAdjust="spacingAndGlyphs">26</text><text x="749.8" y="174.9" textLength="7" lengthAdjust="spacingAndGlyphs">L3</text><text x="749.8" y="188.4" textLength="7" lengthAdjust="spacingAndGlyphs">26</text><text x="784.4" y="137.6" text-anchor="end" textLength="7.5" lengthAdjust="spacingAndGlyphs">L2</text><text x="784.4" y="151.1" text-anchor="end" textLength="10" lengthAdjust="spacingAndGlyphs">6.5</text><text x="784.4" y="174.9" text-anchor="end" textLength="7.5" lengthAdjust="spacingAndGlyphs">L4</text><text x="784.4" y="188.4" text-anchor="end" textLength="10" lengthAdjust="spacingAndGlyphs">6.5</text><text x="836" y="214.9" textLength="9.4" lengthAdjust="spacingAndGlyphs">V1</text><text x="836.9" y="242.4" textLength="13.3" lengthAdjust="spacingAndGlyphs">2.95</text><text x="585.3" y="251.9" text-anchor="end" textLength="8.7" lengthAdjust="spacingAndGlyphs">V4</text><text x="585.3" y="262.1" text-anchor="end" textLength="28.4" lengthAdjust="spacingAndGlyphs">AC 0.4 0</text><text x="587" y="273" text-anchor="end" textLength="56" lengthAdjust="spacingAndGlyphs">SINE(0 0.7 1000)</text><text x="537.1" y="308.2" textLength="63" lengthAdjust="spacingAndGlyphs">;tran 0 40m 0m 1u</text><text x="654.5" y="307.6" textLength="64.6" lengthAdjust="spacingAndGlyphs">.inc dmtriodep1.inc</text><text x="672.6" y="318.6" textLength="71.2" lengthAdjust="spacingAndGlyphs">.include Ecf20n20.txt</text><text x="702.3" y="329" textLength="49.4" lengthAdjust="spacingAndGlyphs">.inc Nosfet.inc</text><text x="686" y="215.4" text-anchor="middle" textLength="8.5" lengthAdjust="spacingAndGlyphs">R4</text><text x="686" y="235.1" text-anchor="middle" textLength="7" lengthAdjust="spacingAndGlyphs">1k</text><text x="649" y="234.1" textLength="9" lengthAdjust="spacingAndGlyphs">R3</text><text x="649" y="246" textLength="15" lengthAdjust="spacingAndGlyphs">100k</text><path d="M745.6 211.5H756.7M753 210V213" stroke="#101010" stroke-width="1" fill="none"/><text x="724" y="204.3" textLength="9.5" lengthAdjust="spacingAndGlyphs">U2</text><text x="708.1" y="260.1" textLength="9" lengthAdjust="spacingAndGlyphs">C1</text><text x="708" y="276.6" textLength="19" lengthAdjust="spacingAndGlyphs">1000μ</text><text x="738.9" y="266.1" textLength="9" lengthAdjust="spacingAndGlyphs">R2</text><text x="739" y="278" textLength="10.5" lengthAdjust="spacingAndGlyphs">100</text><text x="870.5" y="102.8" textLength="9" lengthAdjust="spacingAndGlyphs">V2</text><text x="870.5" y="129" textLength="9" lengthAdjust="spacingAndGlyphs">32</text><text x="955.4" y="102.8" textLength="9" lengthAdjust="spacingAndGlyphs">V5</text><text x="955.4" y="129" textLength="9" lengthAdjust="spacingAndGlyphs">32</text><text x="889.9" y="156" textLength="8.5" lengthAdjust="spacingAndGlyphs">N1</text><text x="889.5" y="165.1" textLength="28.5" lengthAdjust="spacingAndGlyphs">2SK1059</text><text x="959.7" y="156" textLength="8.5" lengthAdjust="spacingAndGlyphs">N2</text><text x="940.8" y="165.1" textLength="28.4" lengthAdjust="spacingAndGlyphs">2SK1059</text><text x="926" y="199.2" text-anchor="middle" textLength="6.5" lengthAdjust="spacingAndGlyphs">I1</text><text x="866.5" y="268.4" textLength="9" lengthAdjust="spacingAndGlyphs">R1</text><text x="864" y="280" textLength="11.5" lengthAdjust="spacingAndGlyphs">100</text><text x="983.3" y="264.3" textLength="9" lengthAdjust="spacingAndGlyphs">R5</text><text x="983" y="277" textLength="11.9" lengthAdjust="spacingAndGlyphs">100</text><text x="927.4" y="269.3" textLength="9" lengthAdjust="spacingAndGlyphs">R7</text><text x="922.4" y="288.2" textLength="19.8" lengthAdjust="spacingAndGlyphs">1000k</text><text x="948.8" y="283.3" textLength="14" lengthAdjust="spacingAndGlyphs">OUT</text><text x="919.1" y="238.8" textLength="15.7" lengthAdjust="spacingAndGlyphs">AC 1</text><text transform="translate(915.5 242) rotate(-90)" text-anchor="middle" textLength="8" lengthAdjust="spacingAndGlyphs">E1</text><text transform="translate(915.5 259.3) rotate(-90)" text-anchor="middle">1</text></g>
<g class="s"><path d="M625.3 511.7 L742.8 511.7 L742.8 521.5 M625.3 511.7 L625.3 529.3 M625.3 550.1 L625.3 559 M625.3 559 L625.3 559 M742.8 548.3 L742.8 559 M742.8 585.3 L742.8 601.5 M791.5 521.5 L791.5 511.4 L854.9 511.4 L854.9 564.3 L873 564.3 M791.5 548.3 L791.5 559 M791.5 585.3 L791.5 713.9 L999.3 713.9 L999.3 564.3 L984.5 564.3 M791.5 553.4 L828 553.4 L828 609.6 M828 630.4 L828 682.3 M828 682.3 L828 682.3 M593 618.4 L675.6 618.4 M697.4 618.4 L726.3 618.4 M593 619.7 L593 618.4 M609.5 618.4 L609.5 655.3 L593 655.3 M593 641.1 L593 676 M593 676 L593 676 M641.6 641.9 L641.6 682.2 M641.6 682.2 L641.6 682.2 M732.6 623 L732.6 653.2 M732.6 639.4 L705.3 639.4 L705.3 659.4 M705.3 662.6 L705.3 681.8 M705.3 681.8 L705.3 681.8 M732.6 675 L732.6 681.8 M732.6 681.8 L732.6 681.8 M886.5 497.6 L886.5 489.1 L924.4 489.1 L924.4 591 L972.5 591 M971.9 497.6 L971.9 489.1 L929.4 489.1 L929.4 585.4 L887.4 585.4 M886.5 517.2 L886.5 543.2 L876.5 543.2 M854.9 564.3 L892.7 564.3 M887.4 553.1 L887.4 652.6 M971.9 517.2 L971.9 543.2 L981.5 543.2 M961 564.3 L999.3 564.3 M972.5 553.1 L972.5 652.6 M887.4 607 L916.1 607 M935.9 607 L972.5 607 M887.4 628.4 L924 628.4 M939.7 628.4 L972.5 628.4 M921.1 644.4 L908.4 644.4 L908.4 698.4 M942.5 644.4 L956.7 644.4 L956.7 671.2 L943 671.2 M908.4 671.2 L921.6 671.2 M887.4 674 L887.4 692.4 L972.5 692.4 L972.5 674 M908.4 698.4 L908.4 698.4" fill="none" stroke="#0000ff" stroke-width="1.25"/>
<g fill="none" stroke="#000090" stroke-width="1"><circle cx="625.3" cy="539.7" r="10.4"/><path d="M621.3 534.5H629.3M625.3 530.5V538.5M621.5 546.5H629"/><path d="M619.1 559H631.5L625.3 565.4Z"/><path d="M742.8 521.5 C750.3 521.5 750.3 530.43 742.8 530.43 C750.3 530.43 750.3 539.37 742.8 539.37 C750.3 539.37 750.3 548.3 742.8 548.3"/><path d="M736.8 528.83H744.3 M736.8 531.63H744.3"/><path d="M736.8 537.77H744.3 M736.8 540.57H744.3"/><path d="M742.8 559 C750.3 559 750.3 567.77 742.8 567.77 C750.3 567.77 750.3 576.53 742.8 576.53 C750.3 576.53 750.3 585.3 742.8 585.3"/><path d="M736.8 566.17H744.3 M736.8 568.97H744.3"/><path d="M736.8 574.93H744.3 M736.8 577.73H744.3"/><path d="M737.6 542.6H741.2L739.4 544.8Z" fill="#000090"/><path d="M791.8 542.6H795.4L793.6 544.8Z" fill="#000090"/><path d="M739.4 579.6L741.1 581.3L739.4 583L737.7 581.3Z"/><path d="M793.6 579.6L795.3 581.3L793.6 583L791.9 581.3Z"/><path d="M791.5 521.5 C784 521.5 784 530.43 791.5 530.43 C784 530.43 784 539.37 791.5 539.37 C784 539.37 784 548.3 791.5 548.3"/><path d="M797.5 528.83H790 M797.5 531.63H790"/><path d="M797.5 537.77H790 M797.5 540.57H790"/><path d="M791.5 559 C784 559 784 567.77 791.5 567.77 C784 567.77 784 576.53 791.5 576.53 C784 576.53 784 585.3 791.5 585.3"/><path d="M797.5 566.17H790 M797.5 568.97H790"/><path d="M797.5 574.93H790 M797.5 577.73H790"/><circle cx="828" cy="620" r="10.4"/><path d="M824 614.5H832M828 610.5V618.5M824.2 626.5H831.8"/><path d="M821.8 682.3H834.2L828 688.7Z"/><path d="M675.6 618.4 L677.42 623.4 L681.05 613.4 L684.68 623.4 L688.32 613.4 L691.95 623.4 L695.58 613.4 L697.4 618.4"/><circle cx="593" cy="630.4" r="10.7"/><path d="M589 624.5H597M589 636.5H597M593 632.5V640.5"/><path d="M586.8 676H599.2L593 682.4Z"/><path d="M641.6 619.7 L646.6 621.55 L636.6 625.25 L646.6 628.95 L636.6 632.65 L646.6 636.35 L636.6 640.05 L641.6 641.9"/><path d="M635.4 682.2H647.8L641.6 688.6Z"/><circle cx="742" cy="617.4" r="15.9"/><path d="M742.5 601.5V612.1"/><rect x="736.5" y="612.1" width="13.1" height="2.5"/><path d="M726.3 618.3H758" stroke-dasharray="3 1.6"/><path d="M733.5 623H750 Q753.5 623 754.5 625" stroke-width="2"/><path d="M699 659.4H711.5M699 662.6H711.5"/><path d="M699.1 681.8H711.5L705.3 688.2Z"/><path d="M732.6 653.2 L737.6 655.02 L727.6 658.65 L737.6 662.28 L727.6 665.92 L737.6 669.55 L727.6 673.18 L732.6 675"/><path d="M726.4 681.8H738.8L732.6 688.2Z"/><circle cx="886.5" cy="507.4" r="9.8"/><path d="M882.5 502.5H890.5M882.5 513.5H890.5M886.5 509.5V517"/><circle cx="971.9" cy="507.4" r="9.8"/><path d="M967.9 502.5H975.9M967.9 513.5H975.9M971.9 509.5V517"/><path d="M873.7 542.6V567.3M876.5 541V567M876.5 553.1H887.4M881 551h4v4"/><path d="M870.9 537H875M876.5 537H879.4" stroke="#000" /><path d="M984.8 542.6V567.3M982 541V567M982 553.1H972.5M977.5 551h-4v4"/><path d="M979 537H983M984.5 537H988.2" stroke="#000"/><circle cx="926" cy="607" r="9.9"/><path d="M920 607H932"/><circle cx="922.5" cy="607" r="1.3"/><path d="M939.7 628.4V634M936 630.5H939M924 628.4V633"/><circle cx="931.8" cy="644.4" r="10.7"/><path d="M925.5 642V647M935 644.4H940M937.5 642V647"/><path d="M921.6 671.2 L923.38 676.2 L926.95 666.2 L930.52 676.2 L934.08 666.2 L937.65 676.2 L941.22 666.2 L943 671.2"/><path d="M887.4 652.6 L892.4 654.38 L882.4 657.95 L892.4 661.52 L882.4 665.08 L892.4 668.65 L882.4 672.22 L887.4 674"/><path d="M972.5 652.6 L977.5 654.38 L967.5 657.95 L977.5 661.52 L967.5 665.08 L977.5 668.65 L967.5 672.22 L972.5 674"/><path d="M902.2 698.4H914.6L908.4 704.8Z"/></g>
<g fill="#0000ff"><rect x="789.7" y="551.6" width="3.6" height="3.6"/><rect x="607.7" y="616.6" width="3.6" height="3.6"/><rect x="591.2" y="653.5" width="3.6" height="3.6"/><rect x="639.8" y="616.6" width="3.6" height="3.6"/><rect x="730.8" y="637.6" width="3.6" height="3.6"/><rect x="970.7" y="589.2" width="3.6" height="3.6"/><rect x="885.6" y="583.6" width="3.6" height="3.6"/><rect x="870" y="562.5" width="3.6" height="3.6"/><rect x="986.8" y="562.5" width="3.6" height="3.6"/><rect x="885.6" y="605.2" width="3.6" height="3.6"/><rect x="970.7" y="605.2" width="3.6" height="3.6"/><rect x="885.6" y="626.6" width="3.6" height="3.6"/><rect x="970.7" y="626.6" width="3.6" height="3.6"/><rect x="906.6" y="669.4" width="3.6" height="3.6"/><rect x="906.6" y="690.6" width="3.6" height="3.6"/></g>
<text x="631.5" y="519.1" textLength="10" lengthAdjust="spacingAndGlyphs">150</text><text x="632" y="529.9" textLength="9" lengthAdjust="spacingAndGlyphs">V3</text><text x="637.7" y="563.6" textLength="70.6" lengthAdjust="spacingAndGlyphs">.ac dec 100 20 20000</text><text x="637.7" y="585.9" textLength="66.3" lengthAdjust="spacingAndGlyphs">.fourier 1000 v(out)</text><text x="750.8" y="492.1" textLength="34.2" lengthAdjust="spacingAndGlyphs">K1 L1 L2 1</text><text x="754" y="508.1" textLength="34" lengthAdjust="spacingAndGlyphs">K2 L3 L4 1</text><text x="749.8" y="532.6" textLength="7" lengthAdjust="spacingAndGlyphs">L1</text><text x="749.8" y="546.1" textLength="7" lengthAdjust="spacingAndGlyphs">26</text><text x="749.8" y="569.9" textLength="7" lengthAdjust="spacingAndGlyphs">L3</text><text x="749.8" y="583.4" textLength="7" lengthAdjust="spacingAndGlyphs">26</text><text x="784.4" y="532.6" text-anchor="end" textLength="7.5" lengthAdjust="spacingAndGlyphs">L2</text><text x="784.4" y="546.1" text-anchor="end" textLength="10" lengthAdjust="spacingAndGlyphs">6.5</text><text x="784.4" y="569.9" text-anchor="end" textLength="7.5" lengthAdjust="spacingAndGlyphs">L4</text><text x="784.4" y="583.4" text-anchor="end" textLength="10" lengthAdjust="spacingAndGlyphs">6.5</text><text x="836" y="609.9" textLength="9.4" lengthAdjust="spacingAndGlyphs">V1</text><text x="836.9" y="637.4" textLength="12" lengthAdjust="spacingAndGlyphs">0.97</text><text x="585.3" y="646.9" text-anchor="end" textLength="8.7" lengthAdjust="spacingAndGlyphs">V4</text><text x="585.3" y="657.1" text-anchor="end" textLength="28.4" lengthAdjust="spacingAndGlyphs">AC 0.4 0</text><text x="587" y="668" text-anchor="end" textLength="56" lengthAdjust="spacingAndGlyphs">SINE(0 0.7 1000)</text><text x="537.1" y="703.2" textLength="63" lengthAdjust="spacingAndGlyphs">;tran 0 40m 0m 1u</text><text x="654.5" y="702.6" textLength="64.6" lengthAdjust="spacingAndGlyphs">.inc dmtriodep1.inc</text><text x="672.6" y="713.6" textLength="71.2" lengthAdjust="spacingAndGlyphs">.include Ecf20n20.txt</text><text x="702.3" y="724" textLength="49.4" lengthAdjust="spacingAndGlyphs">.inc Nosfet.inc</text><text x="686" y="610.4" text-anchor="middle" textLength="8.5" lengthAdjust="spacingAndGlyphs">R4</text><text x="686" y="630.1" text-anchor="middle" textLength="7" lengthAdjust="spacingAndGlyphs">1k</text><text x="649" y="629.1" textLength="9" lengthAdjust="spacingAndGlyphs">R3</text><text x="649" y="641" textLength="15" lengthAdjust="spacingAndGlyphs">100k</text><path d="M745.6 606.5H756.7M753 605V608" stroke="#101010" stroke-width="1" fill="none"/><text x="724" y="599.3" textLength="9.5" lengthAdjust="spacingAndGlyphs">U2</text><text x="708.1" y="655.1" textLength="9" lengthAdjust="spacingAndGlyphs">C1</text><text x="708" y="671.6" textLength="19" lengthAdjust="spacingAndGlyphs">1000μ</text><text x="738.9" y="661.1" textLength="9" lengthAdjust="spacingAndGlyphs">R2</text><text x="739" y="673" textLength="10.5" lengthAdjust="spacingAndGlyphs">100</text><text x="870.5" y="497.8" textLength="9" lengthAdjust="spacingAndGlyphs">V2</text><text x="870.5" y="524" textLength="9" lengthAdjust="spacingAndGlyphs">32</text><text x="955.4" y="497.8" textLength="9" lengthAdjust="spacingAndGlyphs">V5</text><text x="955.4" y="524" textLength="9" lengthAdjust="spacingAndGlyphs">32</text><text x="926" y="594.2" text-anchor="middle" textLength="6.5" lengthAdjust="spacingAndGlyphs">I1</text><text x="866.5" y="663.4" textLength="9" lengthAdjust="spacingAndGlyphs">R1</text><text x="864" y="675" textLength="11.5" lengthAdjust="spacingAndGlyphs">100</text><text x="983.3" y="659.3" textLength="9" lengthAdjust="spacingAndGlyphs">R5</text><text x="983" y="672" textLength="11.9" lengthAdjust="spacingAndGlyphs">100</text><text x="927.4" y="664.3" textLength="9" lengthAdjust="spacingAndGlyphs">R7</text><text x="922.4" y="683.2" textLength="19.8" lengthAdjust="spacingAndGlyphs">1000k</text><text x="948.8" y="678.3" textLength="14" lengthAdjust="spacingAndGlyphs">OUT</text><text x="919.1" y="633.8" textLength="15.7" lengthAdjust="spacingAndGlyphs">AC 1</text><text transform="translate(915.5 637) rotate(-90)" text-anchor="middle" textLength="8" lengthAdjust="spacingAndGlyphs">E1</text><text transform="translate(915.5 654.3) rotate(-90)" text-anchor="middle">1</text></g>
</svg>
</body></html>
